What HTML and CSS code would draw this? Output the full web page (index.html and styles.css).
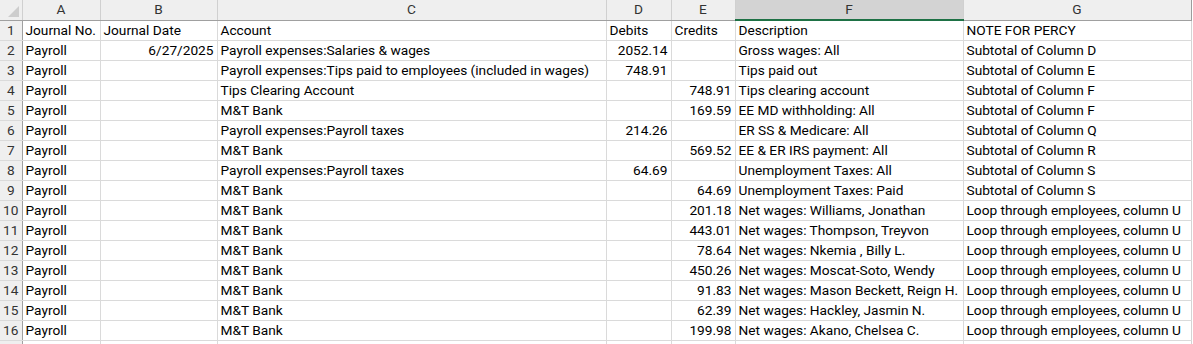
FILE: index.html
```html
<!DOCTYPE html>
<html lang="en">
<head>
    <meta charset="UTF-8">
    <title>Payroll Journal</title>
    <link rel="stylesheet" href="styles.css">
</head>
<body>
    <table class="sheet">
        <colgroup>
            <col class="col-rh">
            <col class="col-a">
            <col class="col-b">
            <col class="col-c">
            <col class="col-d">
            <col class="col-e">
            <col class="col-f">
            <col class="col-g">
            <col>
        </colgroup>
        <thead>
            <tr>
                <th class="corner"><span class="corner-mark"></span></th>
                <th>A</th>
                <th>B</th>
                <th>C</th>
                <th>D</th>
                <th>E</th>
                <th class="selected">F</th>
                <th class="last">G</th>
                <th class="blank"></th>
            </tr>
        </thead>
        <tbody id="rows"></tbody>
    </table>

    <script>
        const rows = [
            ["Journal No.", "Journal Date", "Account", "Debits", "Credits", "Description", "NOTE FOR PERCY"],
            ["Payroll", "6/27/2025", "Payroll expenses:Salaries & wages", "2052.14", "", "Gross wages: All", "Subtotal of Column D"],
            ["Payroll", "", "Payroll expenses:Tips paid to employees (included in wages)", "748.91", "", "Tips paid out", "Subtotal of Column E"],
            ["Payroll", "", "Tips Clearing Account", "", "748.91", "Tips clearing account", "Subtotal of Column F"],
            ["Payroll", "", "M&T Bank", "", "169.59", "EE MD withholding: All", "Subtotal of Column F"],
            ["Payroll", "", "Payroll expenses:Payroll taxes", "214.26", "", "ER SS & Medicare: All", "Subtotal of Column Q"],
            ["Payroll", "", "M&T Bank", "", "569.52", "EE & ER IRS payment: All", "Subtotal of Column R"],
            ["Payroll", "", "Payroll expenses:Payroll taxes", "64.69", "", "Unemployment Taxes: All", "Subtotal of Column S"],
            ["Payroll", "", "M&T Bank", "", "64.69", "Unemployment Taxes: Paid", "Subtotal of Column S"],
            ["Payroll", "", "M&T Bank", "", "201.18", "Net wages: Williams, Jonathan", "Loop through employees, column U"],
            ["Payroll", "", "M&T Bank", "", "443.01", "Net wages: Thompson, Treyvon", "Loop through employees, column U"],
            ["Payroll", "", "M&T Bank", "", "78.64", "Net wages: Nkemia , Billy L.", "Loop through employees, column U"],
            ["Payroll", "", "M&T Bank", "", "450.26", "Net wages: Moscat-Soto, Wendy", "Loop through employees, column U"],
            ["Payroll", "", "M&T Bank", "", "91.83", "Net wages: Mason Beckett, Reign H.", "Loop through employees, column U"],
            ["Payroll", "", "M&T Bank", "", "62.39", "Net wages: Hackley, Jasmin N.", "Loop through employees, column U"],
            ["Payroll", "", "M&T Bank", "", "199.98", "Net wages: Akano, Chelsea C.", "Loop through employees, column U"],
            ["", "", "", "", "", "", ""]
        ];

        const tbody = document.getElementById("rows");

        rows.forEach((row, index) => {
            const tr = document.createElement("tr");
            const head = document.createElement("th");
            head.className = "row-head";
            head.textContent = index < rows.length - 1 ? index + 1 : "";
            tr.appendChild(head);

            row.forEach((value, col) => {
                const td = document.createElement("td");
                td.textContent = value;
                // dates and numbers are right aligned, like Excel does
                if (index > 0 && (col === 1 || col === 3 || col === 4)) {
                    td.classList.add("num");
                }
                if (col === 6) {
                    td.classList.add("last");
                }
                tr.appendChild(td);
            });

            tr.appendChild(document.createElement("td"));
            tbody.appendChild(tr);
        });
    </script>
</body>
</html>
```

FILE: styles.css
```css
body {
    margin: 0;
    background-color: #ffffff;
    font-family: Roboto, 'Noto Sans', sans-serif;
    font-size: 13.7px;
    color: #000000;
    overflow: hidden;
}
.sheet {
    border-collapse: collapse;
    table-layout: fixed;
    width: 1193px;
}
.col-rh { width: 22px; }
.col-a { width: 78px; }
.col-b { width: 117px; }
.col-c { width: 389px; }
.col-d { width: 65px; }
.col-e { width: 64px; }
.col-f { width: 228px; }
.col-g { width: 228px; }
th, td {
    height: 19px;
    padding: 0 3px;
    border: 1px solid #dadada;
    white-space: nowrap;
    overflow: hidden;
    line-height: 19px;
    box-sizing: border-box;
}
thead th {
    background-color: #efefef;
    font-weight: normal;
    color: #333333;
    border-top: none;
    border-bottom: 1px solid #a0a0a0;
    border-right-color: #d0d0d0;
    text-align: center;
}
thead th.selected {
    background-color: #d3d3d3;
    border-bottom: 2px solid #1e7145;
}
thead th.last {
    border-right: 1px solid #9c9c9c;
}
thead th.blank {
    background-color: #ffffff;
    border: none;
}
.corner {
    position: relative;
    border-left: none;
}
.corner-mark {
    position: absolute;
    right: 3px;
    bottom: 3px;
    width: 0;
    height: 0;
    border-left: 11px solid transparent;
    border-bottom: 11px solid #cdcdcd;
}
.row-head {
    background-color: #efefef;
    font-weight: normal;
    color: #333333;
    text-align: center;
    padding: 0;
    border-left: none;
    border-right: 1px solid #a0a0a0;
}
tbody td {
    height: 20px;
}
tbody td.num {
    text-align: right;
}
tbody td.last {
    border-right: 1px solid #d4d4d4;
}
tbody td:last-child {
    border: none;
    border-top: 1px solid #ffffff;
}
```
